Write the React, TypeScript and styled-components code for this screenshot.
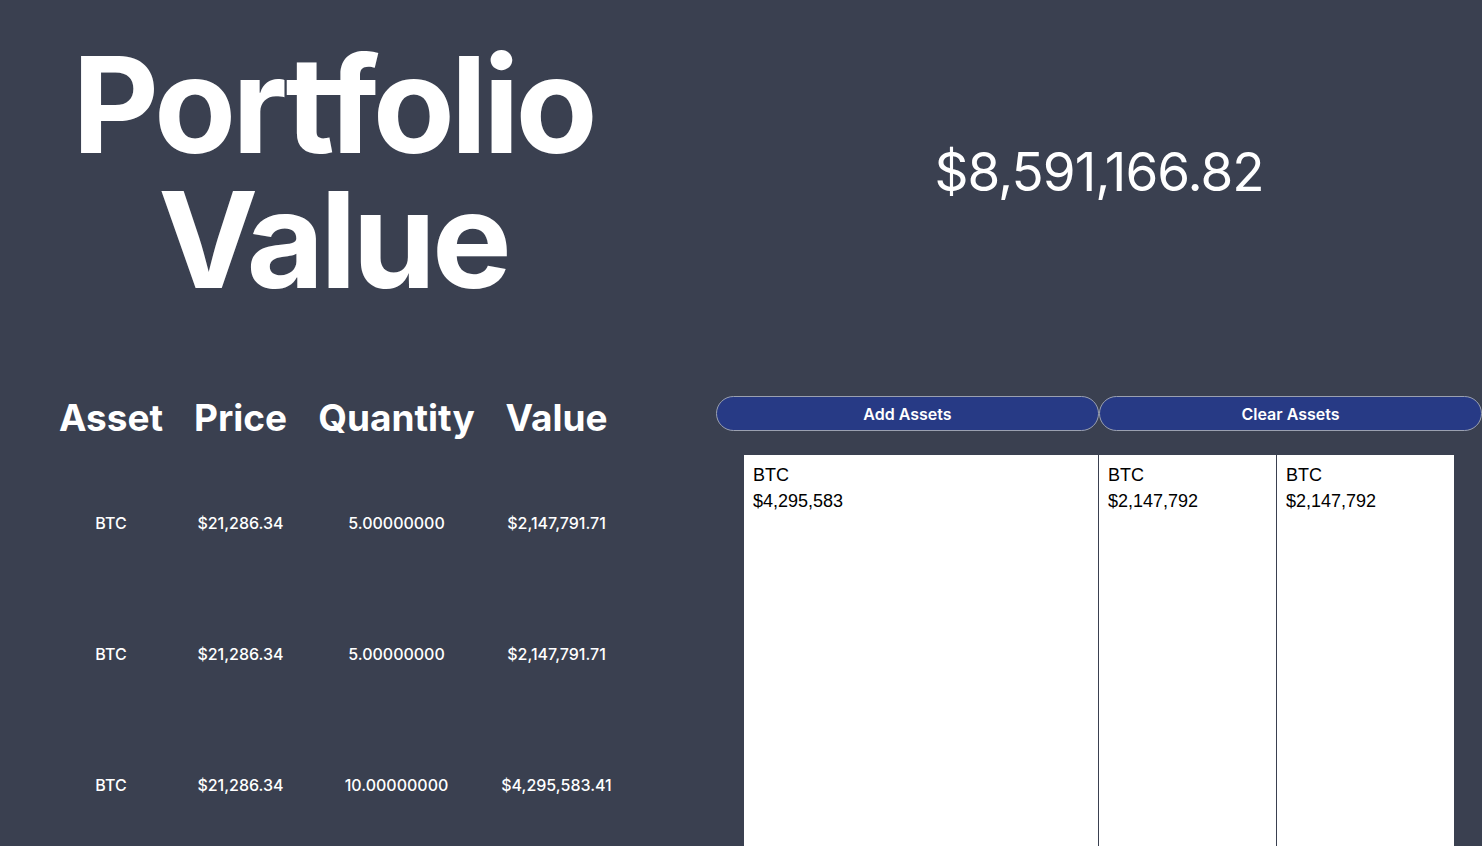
import React from "react";
import styled, { createGlobalStyle } from "styled-components";

const GlobalStyle = createGlobalStyle`
  html, body {
    margin: 0;
    padding: 0;
    background: #3a4050;
    font-family: "Inter", "Noto Sans", sans-serif;
    color: #ffffff;
    overflow: hidden;
  }
`;

const Page = styled.div`
  width: 1482px;
  display: grid;
  grid-template-columns: 666px 1fr;
  grid-template-rows: 344px auto;
  column-gap: 50px;
  row-gap: 52px;
`;

const TitleCell = styled.div`
  display: flex;
  align-items: center;
  justify-content: center;
`;

const Title = styled.h1`
  margin: 0;
  font-size: 134px;
  line-height: 135px;
  font-weight: 700;
  text-align: center;
  letter-spacing: -4px;
`;

const TotalCell = styled.div`
  display: flex;
  align-items: center;
  justify-content: center;
`;

const Total = styled.div`
  font-size: 53px;
  font-weight: 400;
  letter-spacing: -1px;
`;

const Table = styled.table`
  margin: 0 auto;
  border-collapse: collapse;
  table-layout: fixed;
  width: 579px;
  align-self: start;
`;

const HeadCell = styled.th<{ $w: number }>`
  width: ${(p) => p.$w}px;
  padding: 0 0 17px;
  font-size: 37px;
  line-height: 44px;
  font-weight: 700;
  text-align: center;
  white-space: nowrap;
`;

const DataCell = styled.td`
  height: 131px;
  padding: 0;
  font-size: 16px;
  font-weight: 500;
  text-align: center;
  vertical-align: middle;
`;

const RightCol = styled.div`
  display: flex;
  flex-direction: column;
  gap: 24px;
`;

const ButtonRow = styled.div`
  display: grid;
  grid-template-columns: 1fr 1fr;
`;

const PillButton = styled.button`
  height: 35px;
  border: 1px solid #9aa0b0;
  border-radius: 18px;
  background: #273a85;
  color: #ffffff;
  font-family: "Inter", sans-serif;
  font-size: 16px;
  font-weight: 600;
  cursor: pointer;
`;

const Treemap = styled.div`
  margin: 0 28px;
  height: 430px;
  display: flex;
  gap: 1px;
  background: #3a4050;
`;

const Tile = styled.div`
  box-sizing: border-box;
  flex: 0 1 auto;
  min-width: 0;
  background: #ffffff;
  color: #000000;
  padding: 7px 9px;
  font-family: "Liberation Sans", Arial, sans-serif;
  font-size: 18px;
  line-height: 26px;
  white-space: nowrap;
`;

const rows = [
  { asset: "BTC", price: "$21,286.34", qty: "5.00000000", value: "$2,147,791.71" },
  { asset: "BTC", price: "$21,286.34", qty: "5.00000000", value: "$2,147,791.71" },
  { asset: "BTC", price: "$21,286.34", qty: "10.00000000", value: "$4,295,583.41" },
];

const tiles = [
  { name: "BTC", value: 4295583 },
  { name: "BTC", value: 2147792 },
  { name: "BTC", value: 2147792 },
];

const totalTiles = tiles.reduce((s, t) => s + t.value, 0);

const cols = [
  { label: "Asset", w: 135 },
  { label: "Price", w: 124 },
  { label: "Quantity", w: 188 },
  { label: "Value", w: 132 },
];

export default function App() {
  return (
    <>
      <GlobalStyle />
      <Page>
        <TitleCell>
          <Title>
            Portfolio
            <br />
            Value
          </Title>
        </TitleCell>
        <TotalCell>
          <Total>$8,591,166.82</Total>
        </TotalCell>
        <Table>
          <thead>
            <tr>
              {cols.map((c) => (
                <HeadCell key={c.label} $w={c.w}>
                  {c.label}
                </HeadCell>
              ))}
            </tr>
          </thead>
          <tbody>
            {rows.map((r, i) => (
              <tr key={i}>
                <DataCell>{r.asset}</DataCell>
                <DataCell>{r.price}</DataCell>
                <DataCell>{r.qty}</DataCell>
                <DataCell>{r.value}</DataCell>
              </tr>
            ))}
          </tbody>
        </Table>
        <RightCol>
          <ButtonRow>
            <PillButton>Add Assets</PillButton>
            <PillButton>Clear Assets</PillButton>
          </ButtonRow>
          <Treemap>
            {tiles.map((t, i) => (
              <Tile key={i} style={{ width: `${(t.value / totalTiles) * 100}%` }}>
                {t.name}
                <br />${t.value.toLocaleString("en-US")}
              </Tile>
            ))}
          </Treemap>
        </RightCol>
      </Page>
    </>
  );
}
